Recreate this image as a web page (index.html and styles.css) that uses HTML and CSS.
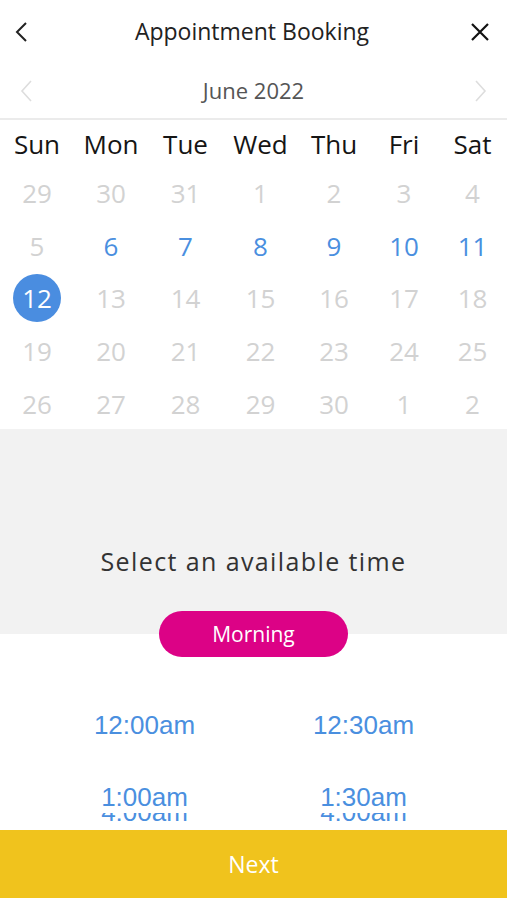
FILE: index.html
```html
<!DOCTYPE html>
<html lang="en">

<head>
    <meta charset="UTF-8">
    <meta name="viewport" content="width=device-width, initial-scale=1.0">
    <title>Appointment Booking</title>
    <link rel="stylesheet" href="styles.css">
</head>

<body>
    <div class="screen">
        <!-- Barra superior -->
        <div class="top-bar">
            <button class="icon-btn">
                <svg width="14" height="22" viewBox="0 0 14 22"><path d="M12 2 L3 11 L12 20" fill="none" stroke="#222" stroke-width="2"/></svg>
            </button>
            <div class="title">Appointment Booking</div>
            <button class="icon-btn">
                <svg width="20" height="20" viewBox="0 0 20 20"><path d="M2 2 L18 18 M18 2 L2 18" fill="none" stroke="#111" stroke-width="2.2"/></svg>
            </button>
        </div>

        <div class="month-bar">
            <svg width="12" height="24" viewBox="0 0 12 24"><path d="M11 2 L2 12 L11 22" fill="none" stroke="#ddd" stroke-width="1.6"/></svg>
            <div class="month">June 2022</div>
            <svg width="12" height="24" viewBox="0 0 12 24"><path d="M1 2 L10 12 L1 22" fill="none" stroke="#ddd" stroke-width="1.6"/></svg>
        </div>

        <!-- Calendário -->
        <div class="calendar">
            <div class="weekday">Sun</div>
            <div class="weekday">Mon</div>
            <div class="weekday">Tue</div>
            <div class="weekday">Wed</div>
            <div class="weekday">Thu</div>
            <div class="weekday">Fri</div>
            <div class="weekday">Sat</div>

            <div class="day">29</div>
            <div class="day">30</div>
            <div class="day">31</div>
            <div class="day">1</div>
            <div class="day">2</div>
            <div class="day">3</div>
            <div class="day">4</div>

            <div class="day">5</div>
            <div class="day available">6</div>
            <div class="day available">7</div>
            <div class="day available">8</div>
            <div class="day available">9</div>
            <div class="day available">10</div>
            <div class="day available">11</div>

            <div class="day"><span class="selected">12</span></div>
            <div class="day">13</div>
            <div class="day">14</div>
            <div class="day">15</div>
            <div class="day">16</div>
            <div class="day">17</div>
            <div class="day">18</div>

            <div class="day">19</div>
            <div class="day">20</div>
            <div class="day">21</div>
            <div class="day">22</div>
            <div class="day">23</div>
            <div class="day">24</div>
            <div class="day">25</div>

            <div class="day">26</div>
            <div class="day">27</div>
            <div class="day">28</div>
            <div class="day">29</div>
            <div class="day">30</div>
            <div class="day">1</div>
            <div class="day">2</div>
        </div>

        <div class="time-header">
            <div class="time-label">Select an available time</div>
        </div>

        <div class="period-wrap">
            <div class="period-pill">Morning</div>
        </div>

        <div class="slots">
            <div class="slot">12:00am</div>
            <div class="slot">12:30am</div>
            <div class="slot">1:00am</div>
            <div class="slot">1:30am</div>
        </div>
        <!-- próxima linha da lista, cortada -->
        <div class="slots slots-cut">
            <div class="slot">4:00am</div>
            <div class="slot">4:00am</div>
        </div>

        <button class="next-btn">Next</button>
    </div>
</body>

</html>
```

FILE: styles.css
```css
* {
    box-sizing: border-box;
}

body {
    margin: 0;
    font-family: "Open Sans", Arial, sans-serif;
    background: #fff;
}

.screen {
    width: 507px;
    height: 900px;
    overflow: hidden;
}

.top-bar {
    height: 64px;
    display: flex;
    align-items: center;
    justify-content: space-between;
    padding: 0 17px 0 14px;
}

.icon-btn {
    background: none;
    border: none;
    padding: 0;
    display: flex;
    align-items: center;
}

.title {
    font-size: 23px;
    color: #222;
    margin-left: 6px;
    margin-top: -2px;
}

.month-bar {
    height: 56px;
    display: flex;
    align-items: center;
    justify-content: space-between;
    padding: 0 20px 0 20px;
    border-bottom: 2px solid #ebebeb;
}

.month {
    font-size: 22px;
    color: #555;
    margin-top: -2px;
}

/* Calendário */
.calendar {
    display: grid;
    grid-template-columns: 74px 74px 75px 75px 72px 68px 69px;
    grid-auto-rows: 52.6px;
    grid-template-rows: 47px;
    height: 309px;
}

.weekday {
    display: flex;
    align-items: center;
    justify-content: center;
    font-size: 26px;
    color: #151515;
}

.day {
    display: flex;
    align-items: center;
    justify-content: center;
    font-size: 26px;
    color: #d2d2d2;
}

.day.available {
    color: #4a8fdf;
}

.selected {
    width: 48px;
    height: 48px;
    border-radius: 50%;
    background: #4a8de0;
    color: #fff;
    display: flex;
    align-items: center;
    justify-content: center;
}

.time-header {
    background: #f2f2f2;
    height: 205px;
    display: flex;
    align-items: flex-end;
    justify-content: center;
    padding-bottom: 56px;
}

.time-label {
    font-size: 25px;
    letter-spacing: 1.4px;
    color: #333;
}

.period-wrap {
    display: flex;
    justify-content: center;
    margin-top: -23px;
}

.period-pill {
    width: 189px;
    height: 46px;
    border-radius: 23px;
    background: #dc0286;
    color: #fff;
    font-size: 21px;
    display: flex;
    align-items: center;
    justify-content: center;
}

.slots {
    display: grid;
    grid-template-columns: 1fr 1fr;
    padding: 53px 34px 0 35px;
    grid-auto-rows: 30px;
    row-gap: 42px;
}

.slot {
    font-family: "Liberation Sans", Arial, sans-serif;
    font-size: 26px;
    line-height: 30px;
    color: #4a8fdf;
    text-align: center;
}

.slots-cut {
    padding-top: 0;
    margin-top: 1px;
    height: 8px;
    overflow: hidden;
}

.slots-cut .slot {
    margin-top: -16px;
}

.next-btn {
    display: block;
    width: 100%;
    height: 68px;
    margin-top: 9px;
    border: none;
    background: #f0c31d;
    color: #fff;
    font-family: "Open Sans", Arial, sans-serif;
    font-size: 23px;
}
```
